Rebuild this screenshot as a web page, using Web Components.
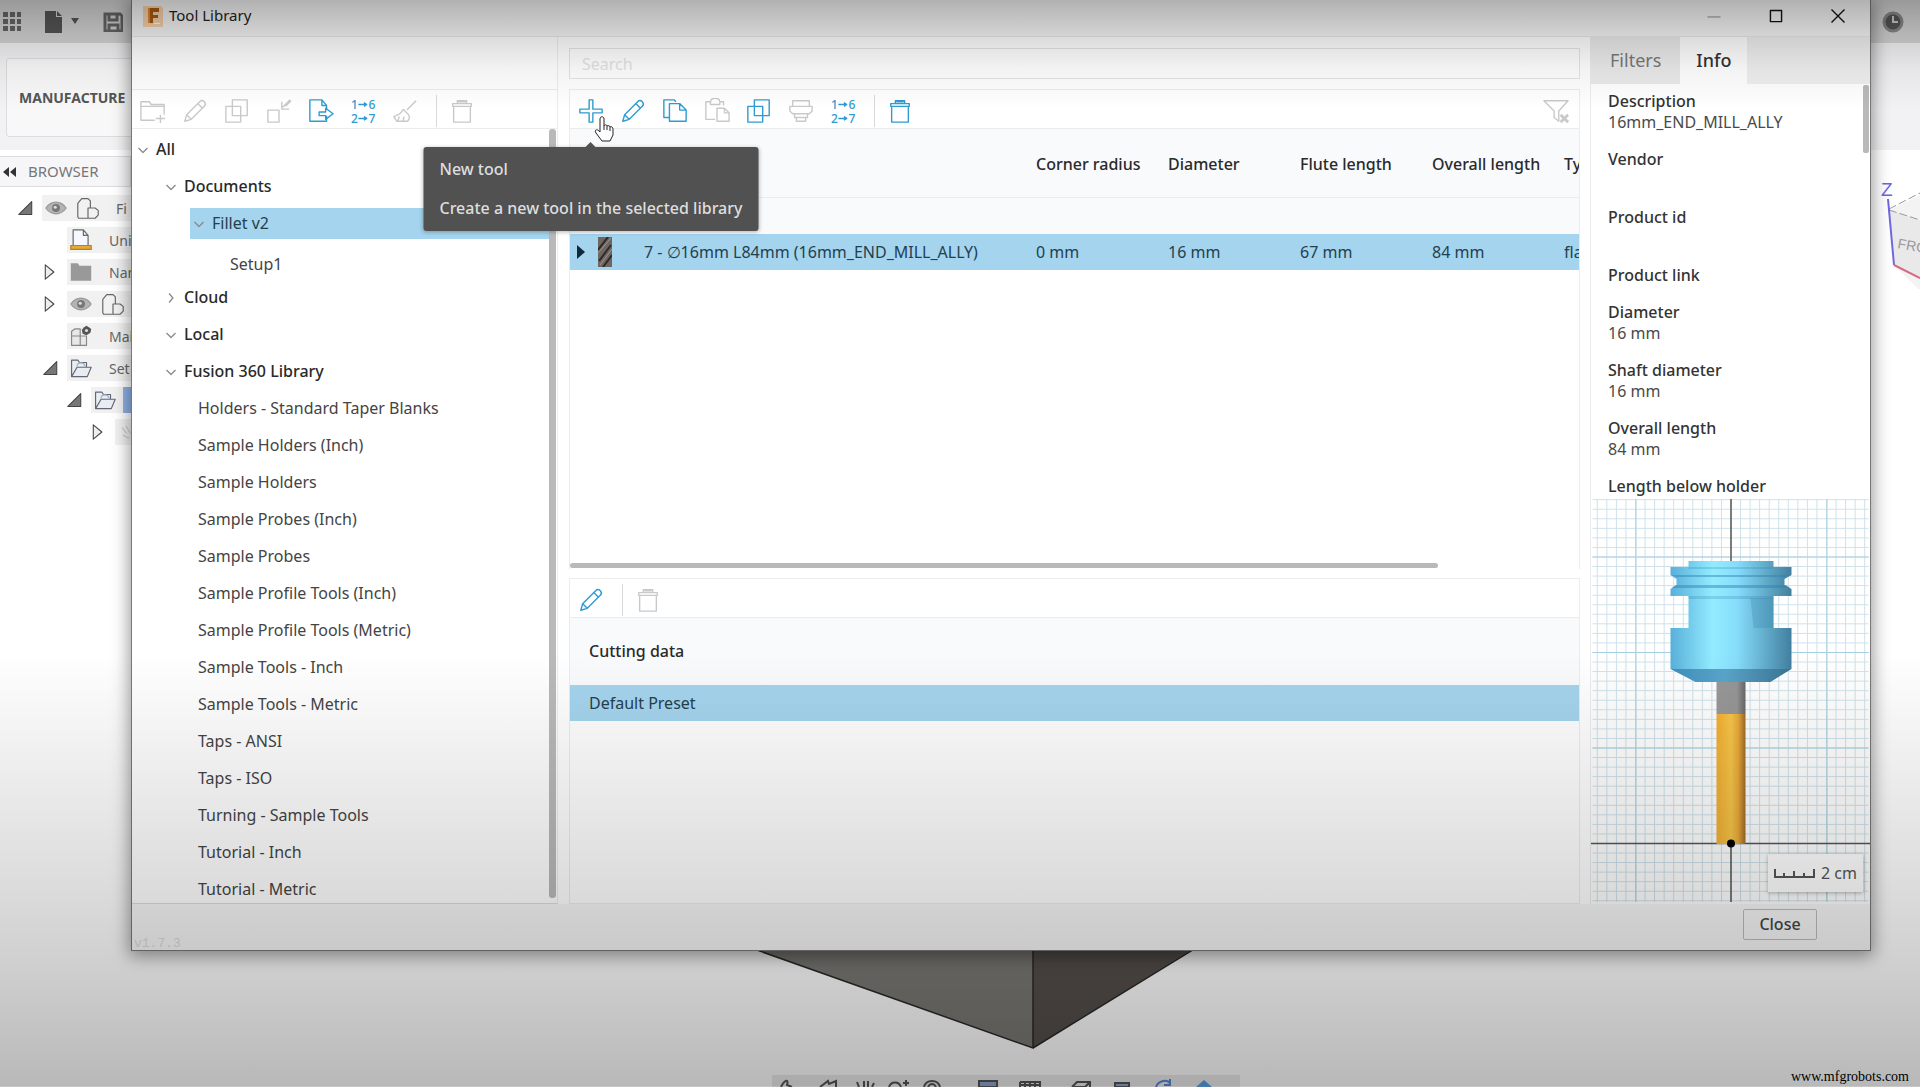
<!DOCTYPE html>
<html lang="en">
<head>
<meta charset="utf-8">
<meta name="viewport" content="width=device-width, initial-scale=1">
<title>Tool Library</title>
<style>
  html, body { height: 100%; margin: 0; }
  body {
    font-family: 'Noto Sans', 'Open Sans', sans-serif;
    font-size: 16px;
    line-height: 21px;
    color: #444;
    overflow: hidden;
    --accent: #2f9bd0;
    --muted: #c9c9c9;
    --select: #a5d4ee;
    --line: #ececec;
  }
</style>
</head>
<body>

<cam-workspace>
  <tool-library-window heading="Tool Library" version="v1.7.3">
    <library-panel slot="libraries"></library-panel>
    <tool-panel slot="tools"></tool-panel>
    <info-panel slot="info"></info-panel>
  </tool-library-window>
</cam-workspace>

<script>
/* Icon drawings, all on a 28 x 28 grid and stroked with currentColor */
const ICONS = {
  folderAdd: '<path d="M16 24H1V4h9l2 3h14v11M1 9h25M22 18v9M17 22h10"/>',
  pencil: '<path d="M3 25l2-7L19 4a3 3 0 0 1 5 5L10 23zM5 18l5 5M17 6l5 5"/>',
  duplicate: '<path d="M9 9V2h16v17h-7M18 26H2V9h16v17M9 9v10h9"/>',
  extract: '<path d="M2 13h12v13H2zM26 2l-8 8M17 4v8h8M21 9l6-6"/>',
  exportDoc: '<path d="M20 19v6H2V2h13l5 6v4M15 2v6h5"/><path d="M12 15h7v-4l8 6-8 6v-4h-7z"/>',
  broom: '<path d="M26 3L16 13M12 12l6 6M12 12c-2 5-5 6-10 8l3 5h12c2-3 2-5 1-7M8 20l-2 5M13 20l-1 5"/>',
  trash: '<path d="M4 6h20v3H4zM5 9h18v17H5zM9 6V3h10v3M10 4h8"/>',
  plus: '<path d="M12 2h4v10h10v4H16v10h-4V16H2v-4h10z"/>',
  copy: '<path d="M8 21H2V2h11l2 2M8 6h11l7 7v12H8zM19 6v7h7"/>',
  paste: '<path d="M12 23H2V4h5c0-5 10-5 10 0h4v4M7 4v3h10V4M14 11h8l5 5v9H14zM22 11v5h5"/>',
  holder: '<path d="M5 3h18v6H5zM2 9h24v5l-3 3H5l-3-3zM7 17h14v4H7zM9 21h10v4H9z"/>',
  filterClear: '<path d="M1 3h26L17 14v11l-5-4v-7z"/><path stroke-width="3" d="M19 18l8 8M27 18l-8 8"/>',
  renumber: `<g fill="currentColor" stroke="none" font-family="Noto Sans, sans-serif" font-size="13" font-weight="500">
      <text x="1" y="12">1</text><text x="20" y="12">6</text>
      <text x="1" y="27">2</text><text x="20" y="27">7</text></g>
    <path d="M9 7h8M15 5l3 2-3 2M9 22h8M15 20l3 2-3 2"/>`,
  down: '<path stroke-width="2" d="M7 11l7 7 7-7"/>',
  right: '<path stroke-width="2" d="M11 7l6 7-6 7"/>',
  minimize: '<path d="M7 15h14"/>',
  maximize: '<path d="M8 8h12v12H8z"/>',
  close: '<path d="M7 7l14 14M21 7L7 21"/>',
  opened: '<path fill="#777" d="M22 5v18H4z"/>',
  closed: '<path fill="#eee" d="M6 4v20l12-10z"/>',
  eye: '<path fill="#b4b4b4" stroke="#999" d="M1 14c7-10 19-10 26 0-7 10-19 10-26 0z"/><circle cx="14" cy="14" r="5" fill="#777" stroke="none"/><circle cx="13" cy="13" r="2" fill="#ddd" stroke="none"/>',
  body: '<path fill="#f2f2f2" d="M1 8l5-6h8l3 3v9h6l4 3v6l-4 4H2l-1-2zM14 27V14h3"/>',
  units: '<path fill="#f5f8fc" d="M4 21V1h13l6 7v13M17 1v7h6"/><path fill="#e5a93a" stroke="#b98218" d="M1 21h26v5H1z"/>',
  folder: '<path fill="#999" stroke="none" d="M1 3h9l2 3h15v19H1z"/>',
  model: '<path fill="#e8e8e8" stroke="#888" d="M2 8l4-3h7v9H2zM2 14h11v12H2zM13 14h8v12h-8z"/><path fill="#555" stroke="none" d="M21 1l3 2 3 2-1 5-5 3-5-2-1-5 3-3z"/><circle cx="21" cy="7" r="2" fill="#ddd" stroke="none"/>',
  setup: '<path fill="#e9edf2" stroke="#667" d="M2 25V4h8l2 3h9v6M2 25l7-12h18l-5 12z"/><path stroke="#9bb2c4" d="M9 12c0-6 9-6 10 0"/>',
  faint: '<path stroke="#ccc" d="M5 8l6 8M10 6l6 10M6 18l8 4"/>'
};

const icon = (name, size) =>
  `<svg class="icon" width="${size}" height="${size}" viewBox="0 0 28 28" fill="none" stroke="currentColor"
    stroke-width="1.5" stroke-linejoin="round" aria-hidden="true">${ICONS[name]}</svg>`;

/** Base class: puts the markup of a component in its open shadow root. */
class Component extends HTMLElement {
  constructor() {
    super();
    this.attachShadow({ mode: 'open' });
  }

  connectedCallback() {
    this.shadowRoot.innerHTML = `<style>:host { display: block; box-sizing: border-box; }
      *, *::before, *::after { box-sizing: border-box; }
      svg { display: block; flex: none; }
      button { font: inherit; color: inherit; margin: 0; padding: 0; border: 0; background: none; }
    </style>${this.template()}`;
  }

  template() { return '<slot></slot>'; }
}

/**
 * <icon-button icon="plus" label="New tool" [active]>
 */
class IconButton extends Component {
  template() {
    return `
      <style>
        :host { flex: none; color: var(--muted); }
        :host([active]) { color: var(--accent); }
        button { width: 42px; height: 36px; display: grid; place-items: center; }
      </style>
      <button type="button" aria-label="${this.getAttribute('label')}">${icon(this.getAttribute('icon'), 26)}</button>
    `;
  }
}

/** <tool-bar>: a row of icon buttons; <hr> inside it is a separator. */
class ToolBar extends Component {
  template() {
    return `
      <style>
        :host { display: flex; align-items: center; flex: none; height: 40px; padding-top: 4px; background: #fff;
                border-top: 1px solid var(--line); border-bottom: 1px solid var(--line); }
        ::slotted(hr) { width: 1px; height: 32px; margin: 0 4px 0 10px; border: 0; background: #d9d9d9; }
        ::slotted([end]) { margin: 0 2px 0 auto; }
      </style>
      <slot></slot>
    `;
  }
}

/** <hover-tip heading="...">: dark balloon with its arrow on the top edge. */
class HoverTip extends Component {
  template() {
    return `
      <style>
        :host { padding: 12px 16px; background: #515151; color: #dedede; border-radius: 3px;
                font-weight: 500; white-space: nowrap; box-shadow: 0 1px 4px rgba(0,0,0,.3); }
        :host::before { content: ''; position: absolute; top: -5px; left: calc(50% - 5px);
                border: 5px solid transparent; border-top: 0; border-bottom-color: #515151; }
        p { margin: 0 0 18px; }
        p:last-child { margin: 0; }
      </style>
      <p>${this.getAttribute('heading')}</p>
      <p><slot></slot></p>
    `;
  }
}

/** <library-panel>: toolbar and tree of tool libraries. */
class LibraryPanel extends Component {
  template() {
    const rows = [
      ['All', 0, 'down'], ['Documents', 1, 'down'], ['Fillet v2', 2, 'down', 'selected'], ['Setup1', 3, '', 'operation'],
      ['Cloud', 1, 'right'], ['Local', 1, 'down'], ['Fusion 360 Library', 1, 'down'],
      ...['Holders - Standard Taper Blanks', 'Sample Holders (Inch)', 'Sample Holders', 'Sample Probes (Inch)',
        'Sample Probes', 'Sample Profile Tools (Inch)', 'Sample Profile Tools (Metric)', 'Sample Tools - Inch',
        'Sample Tools - Metric', 'Taps - ANSI', 'Taps - ISO', 'Turning - Sample Tools', 'Tutorial - Inch',
        'Tutorial - Metric'].map(name => [name, 2, '', 'library'])
    ];
    return `
      <style>
        :host { display: flex; flex-direction: column; min-height: 0; padding-top: 52px;
                border-right: 1px solid var(--line); border-bottom: 1px solid #ddd; }
        .scroller { display: flex; flex: 1; min-height: 0; padding-right: 1px; overflow: hidden; }
        ul { flex: 1; margin: 0; padding: 2px 0 0; list-style: none; }
        li { padding-left: calc(var(--depth) * 28px + 2px); }
        button { display: flex; align-items: center; gap: 4px; width: 100%; height: 37px; text-align: left; white-space: nowrap; }
        .branch { font-weight: 500; color: #2a2a2a; }
        .icon { color: #8a8a8a; }
        .selected button { height: 31px; margin: 3px 0 7px; background: var(--select); font-weight: 400; color: #24404f; }
        .operation button { height: 33px; padding: 4px 0 0 12px; }
        .library button { padding-left: 8px; }
        .thumb { width: 7px; margin-bottom: 5px; border-radius: 3px; background: #b9b9b9; }
      </style>
      <tool-bar>
        <icon-button icon="folderAdd" label="New folder"></icon-button>
        <icon-button icon="pencil" label="Rename"></icon-button>
        <icon-button icon="duplicate" label="Duplicate library"></icon-button>
        <icon-button icon="extract" label="Import library"></icon-button>
        <icon-button icon="exportDoc" label="Export library" active></icon-button>
        <icon-button icon="renumber" label="Renumber" active></icon-button>
        <icon-button icon="broom" label="Clean up"></icon-button>
        <hr>
        <icon-button icon="trash" label="Delete library"></icon-button>
      </tool-bar>
      <div class="scroller">
        <ul>${rows.map(([name, depth, arrow, kind = 'branch']) => `
          <li class="${kind}" style="--depth:${depth}"><button type="button">${arrow ? icon(arrow, 18) : ''}${name}</button></li>`).join('')}
        </ul>
        <div class="thumb"></div>
      </div>
    `;
  }
}

/** <tool-panel>: search, tool table and cutting data of the selected library. */
class ToolPanel extends Component {
  template() {
    return `
      <style>
        :host { display: flex; flex-direction: column; gap: 10px; min-height: 0; min-width: 0; padding-top: 11px; }
        input { flex: none; width: 100%; height: 31px; padding: 0 12px; border: 1px solid #e4e4e4; background: transparent; font: inherit; }
        input::placeholder { color: #e2e2e2; opacity: 1; }
        .sections { flex: 1; min-height: 0; display: flex; flex-direction: column; gap: 9px; }
        section { display: flex; flex-direction: column; min-height: 0; border: 1px solid var(--line); border-width: 0 1px; }
        .tools { flex: 1; }
        .presets { flex: 0 0 40%; border-bottom-width: 1px; }
        .anchor { position: relative; }
        hover-tip { position: absolute; z-index: 2; top: 54px; left: 21px; translate: -50%; }
        .pointer { position: absolute; z-index: 3; top: 23px; left: 24px; }
        .clip { flex: 1; min-height: 0; overflow: hidden; }
        table { border-collapse: collapse; table-layout: fixed; width: 100%; }
        .tools table { width: calc(100% + 101px); }
        th, td { padding: 0 16px; text-align: left; white-space: nowrap; }
        th { height: 68px; padding-top: 3px; background: #f9fafc; font-weight: 500; color: #2a2a2a; }
        .presets th, .presets td { padding: 0 19px; }
        .presets th { height: 67px; }
        .metric { width: 132px; }
        .group td { height: 37px; border-top: 1px solid var(--line); background: #f9fafc; }
        .selected td { height: 36px; background: var(--select); color: #23404f; }
        .name { display: flex; align-items: center; gap: 12px; margin-left: -10px; }
        .name span { margin-left: 20px; }
        .track { flex: none; height: 6px; }
        .track div { width: 86%; height: 5px; border-radius: 3px; background: #b9b9b9; }
      </style>
      <input type="search" placeholder="Search" aria-label="Search">
      <div class="sections">
        <section class="tools">
          <tool-bar>
            <div class="anchor">
              <icon-button icon="plus" label="New tool" active></icon-button>
              <svg class="pointer" width="20" height="26" viewBox="0 0 20 26" fill="#fff" stroke="#222" stroke-linejoin="round">
                <path d="M6 16V3c0-3 4-3 4 0v7c1-2 3-1 3 0 1-1 3 0 3 1 1-1 3 0 3 2v6l-3 6H8l-6-8c-2-3 1-5 4-1z"/>
                <path d="M10 10v4M13 10v4M16 11v4"/>
              </svg>
              <hover-tip heading="New tool">Create a new tool in the selected library</hover-tip>
            </div>
            <icon-button icon="pencil" label="Edit tool" active></icon-button>
            <icon-button icon="copy" label="Copy tool" active></icon-button>
            <icon-button icon="paste" label="Paste tool"></icon-button>
            <icon-button icon="duplicate" label="Duplicate tool" active></icon-button>
            <icon-button icon="holder" label="Assign holder"></icon-button>
            <icon-button icon="renumber" label="Renumber tools" active></icon-button>
            <hr>
            <icon-button icon="trash" label="Delete tool" active></icon-button>
            <icon-button icon="filterClear" label="Clear filters" end></icon-button>
          </tool-bar>
          <div class="clip">
            <table>
              <thead>
                <tr><th></th><th class="metric">Corner radius</th><th class="metric">Diameter</th>
                <th class="metric">Flute length</th><th class="metric">Overall length</th><th class="metric">Type</th></tr>
              </thead>
              <tbody>
                <tr class="group"><td colspan="6"></td></tr>
                <tr class="selected">
                  <td><div class="name">
                    <svg width="10" height="14" viewBox="0 0 10 14"><path fill="#102a3a" d="M1 0v14l8-7z"/></svg>
                    <svg width="14" height="30" viewBox="0 0 14 30"><path fill="#6d6662" d="M0 0h14v30H0z"/>
                      <path fill="none" stroke="#2f2a28" stroke-width="2" d="M0 13L10 0M1 24l12-16M5 30l9-12"/>
                      <path fill="none" stroke="#a3968b" d="M0 16L13 1M2 28l12-16"/></svg>
                    <span>7 - ∅16mm L84mm (16mm_END_MILL_ALLY)</span></div></td>
                  <td>0 mm</td><td>16 mm</td><td>67 mm</td><td>84 mm</td><td>flat</td>
                </tr>
              </tbody>
            </table>
          </div>
          <div class="track"><div></div></div>
        </section>
        <section class="presets">
          <tool-bar>
            <icon-button icon="pencil" label="Edit preset" active></icon-button>
            <hr>
            <icon-button icon="trash" label="Delete preset"></icon-button>
          </tool-bar>
          <table>
            <thead><tr><th>Cutting data</th></tr></thead>
            <tbody><tr class="selected"><td>Default Preset</td></tr></tbody>
          </table>
        </section>
      </div>
    `;
  }
}

/** <tool-preview>: side view of the selected tool in its holder. */
class ToolPreview extends Component {
  template() {
    return `
      <style>
        :host { position: relative; overflow: hidden; }
        .drawing { width: 100%; height: 100%; }
        .scale { position: absolute; right: 7px; bottom: 12px; display: flex; align-items: center; gap: 6px;
                 height: 38px; padding: 0 6px; background: #fff; box-shadow: 0 1px 4px rgba(0,0,0,.3); color: #555; }
      </style>
      <svg class="drawing" viewBox="0 0 280 405" preserveAspectRatio="xMidYMax slice" role="img" aria-label="Tool preview">
        <defs>
          <pattern id="minor" x="140" y="344" width="9.55" height="9.55" patternUnits="userSpaceOnUse">
            <path d="M0 .5H9.55M.5 0V9.55" stroke="#cde1e9" fill="none"/>
          </pattern>
          <pattern id="major" x="45" y="57.500" width="191" height="95.500" patternUnits="userSpaceOnUse">
            <path d="M0 .5H191M.5 0V95.5" stroke="#a6d0e2" fill="none"/>
          </pattern>
          <linearGradient id="steel">
            <stop offset="0" stop-color="#58afda"/><stop offset=".35" stop-color="#92ecff"/>
            <stop offset=".55" stop-color="#86dcfb"/><stop offset="1" stop-color="#427f9f"/>
          </linearGradient>
          <linearGradient id="cone">
            <stop offset="0" stop-color="#3e8fbb"/><stop offset=".45" stop-color="#5aa5cb"/><stop offset="1" stop-color="#3b7391"/>
          </linearGradient>
          <linearGradient id="shank">
            <stop offset="0" stop-color="#989898"/><stop offset=".7" stop-color="#969696"/><stop offset="1" stop-color="#666"/>
          </linearGradient>
          <linearGradient id="flute">
            <stop offset="0" stop-color="#f2ad33"/><stop offset=".5" stop-color="#f6c648"/>
            <stop offset=".75" stop-color="#eaa83a"/><stop offset="1" stop-color="#9c6b26"/>
          </linearGradient>
        </defs>
        <rect x="2" width="276" height="403" fill="url(#minor)"/>
        <rect x="2" width="276" height="403" fill="url(#major)"/>
        <path d="M140.500 0V403M0 344.500H280" stroke="#555" stroke-width="1.500"/>
        <path d="M126 183h29v32h-29z" fill="url(#shank)"/>
        <path d="M126 215h29v130h-29z" fill="url(#flute)"/>
        <path d="M98 62h85v6h18v8l-7 4v6l7 4v7h-18v32h18v41H80v-41h18V97H80v-7l6-4v-6l-6-4v-8h18z" fill="url(#steel)"/>
        <path d="M80 170h121l-21 13h-75z" fill="url(#cone)"/>
        <path d="M80 76h121l-7 2H86zM85 86h111l4 3H81z" fill="#2f7fae" opacity=".45"/>
        <path d="M98 68h85v2H98zM98 97h85v3H98z" fill="#2f7fae" opacity=".25"/>
        <path d="M160 99h23v30h-20z" fill="#3b87ae" opacity=".3"/>
        <circle cx="140.500" cy="344.500" r="4" fill="#000"/>
      </svg>
      <div class="scale">
        <svg width="41" height="12" viewBox="0 0 41 12" fill="none" stroke="#555" stroke-width="2">
          <path d="M1 2v8h39V2M10 10V6M20 10V4M30 10V6"/></svg>
        2 cm
      </div>
    `;
  }
}

/** <info-panel>: Filters / Info tabs, the properties of the tool and its preview. */
class InfoPanel extends Component {
  template() {
    const facts = [['Description', '16mm_END_MILL_ALLY'], ['Vendor', '&nbsp;'], ['Product id', '&nbsp;'], ['Product link'],
      ['Diameter', '16 mm'], ['Shaft diameter', '16 mm'], ['Overall length', '84 mm'], ['Length below holder']];
    return `
      <style>
        :host { display: flex; flex-direction: column; min-height: 0; border-left: 1px solid var(--line); }
        nav { display: flex; flex: none; height: 47px; background: #efefef; font-size: 18px; }
        nav button { padding: 0 19px; color: #777; background: #eaeaea; }
        nav button[aria-selected=true] { padding: 0 16px; color: #333; font-weight: 500; background: #fff; }
        .scroller { flex: 1; min-height: 0; display: flex; overflow: hidden; }
        dl { flex: 1; margin: 0; padding: 7px 17px 0; }
        dt { font-weight: 500; color: #333; }
        dd { margin: 0; color: #4a4a4a; }
        .fact { margin-bottom: 16px; }
        .thumb { width: 6px; height: 68px; margin: 1px; border-radius: 2px; background: #b9b9b9; }
        tool-preview { flex: 0 0 405px; }
      </style>
      <nav role="tablist">
        <button type="button" role="tab" aria-selected="false">Filters</button>
        <button type="button" role="tab" aria-selected="true">Info</button>
      </nav>
      <div class="scroller">
        <dl>${facts.map(([term, value]) => `
          <div class="fact"><dt>${term}</dt>${value ? `<dd>${value}</dd>` : ''}</div>`).join('')}
        </dl>
        <div class="thumb"></div>
      </div>
      <tool-preview></tool-preview>
    `;
  }
}

/** <tool-library-window>: window frame with title bar, three columns and footer. */
class ToolLibraryWindow extends Component {
  template() {
    return `
      <style>
        :host { display: flex; flex-direction: column; background: #fff; border: 1px solid #777; border-top: 0;
                box-shadow: 0 3px 16px 2px rgba(0,0,0,.4); }
        header { display: flex; align-items: center; flex: none; height: 37px; padding: 0 11px 5px; background: #f6f6f6; border-bottom: 1px solid #e8e8e8; }
        h1 { margin: 0 auto 0 6px; font-size: 15px; font-weight: 400; color: #222; }
        header button { width: 62px; height: 32px; display: grid; place-items: center; color: #111; }
        header button:disabled { color: #aaa; }
        header button:last-child { margin-right: -10px; }
        main { flex: 1; min-height: 0; display: grid; grid-template-rows: minmax(0, 1fr);
               grid-template-columns: 426px minmax(0, 1fr) 290px; }
        slot[name=tools]::slotted(*) { margin-left: 11px; }
        slot[name=info]::slotted(*) { margin-left: 10px; }
        footer { display: flex; justify-content: space-between; align-items: flex-start; flex: none; height: 46px; padding: 5px 53px 0 2px; background: #f6f6f6; }
        footer small { align-self: flex-end; font: 13px/12px 'Liberation Mono', monospace; color: #dadada; }
        footer button { width: 74px; height: 31px; border: 1px solid #bbb; border-radius: 2px; font-weight: 500; }
      </style>
      <header>
        <svg width="20" height="22" viewBox="0 0 20 22"><path fill="#f7d3ae" d="M0 1h18l2 2v19H0z"/>
          <path fill="#a85a10" d="M5 3h11v4h-6v3h5v3h-5v5H5z"/><path fill="#e38a2e" d="M5 3h2v15H5z"/><path fill="#fff" d="M11 18h6v1h-6z"/></svg>
        <h1>${this.getAttribute('heading')}</h1>
        <button type="button" aria-label="Minimize" disabled>${icon('minimize', 26)}</button>
        <button type="button" aria-label="Maximize">${icon('maximize', 26)}</button>
        <button type="button" aria-label="Close window">${icon('close', 26)}</button>
      </header>
      <main><slot name="libraries"></slot><slot name="tools"></slot><slot name="info"></slot></main>
      <footer><small>${this.getAttribute('version')}</small><button type="button">Close</button></footer>
    `;
  }
}

/** <model-browser>: tree of the open document, left of the canvas. */
class ModelBrowser extends Component {
  template() {
    const rows = [
      [16, 'opened', ['eye', 'body'], 'Fi'], [41, '', ['units'], 'Uni'], [41, 'closed', ['folder'], 'Nan'],
      [41, 'closed', ['eye', 'body'], ''], [41, '', ['model'], 'Mai'], [41, 'opened', ['setup'], 'Set'],
      [65, 'opened', ['setup'], '', 'current'], [89, 'closed', ['faint'], '']
    ];
    return `
      <style>
        :host { width: 131px; overflow: hidden; }
        header { display: flex; align-items: center; gap: 12px; height: 31px; padding-left: 3px; font-size: 15px; color: #777;
                 background: #f6f6f8; border: 1px solid #ddd; border-left: 0; }
        ul { margin: 5px 0 0; padding: 0; list-style: none; }
        li { display: flex; align-items: center; height: 32px; font-size: 14px; color: #666; padding-left: var(--indent); white-space: nowrap; }
        .twist { flex: none; width: 26px; color: #444; }
        .strip { display: flex; align-items: center; flex: 1; min-width: 0; gap: 10px; height: 26px; padding-left: 3px; background: #f1f1f1; color: #666; }
        .strip span { padding-left: 7px; }
        .current .strip { gap: 7px; }
        .current .strip::after { content: ''; width: 20px; height: 26px; background: #8fb0e6; }
      </style>
      <header><svg width="13" height="10" viewBox="0 0 13 10"><path fill="#333" d="M6 0v10L0 5zM13 0v10L7 5z"/></svg>BROWSER</header>
      <ul>${rows.map(([indent, twist, icons, name, state = '']) => `
        <li class="${state}" style="--indent:${indent}px"><div class="twist">${twist ? icon(twist, 20) : ''}</div>
        <div class="strip">${icons.map(i => icon(i, 22)).join('')}${name && `<span>${name}</span>`}</div></li>`).join('')}
      </ul>
    `;
  }
}

/** <cam-workspace>: the CAM application behind the window passed in its slot. */
class CamWorkspace extends Component {
  template() {
    return `
      <style>
        :host { position: relative; display: flex; flex-direction: column; height: 100%; overflow: hidden; background: #fff; }
        .bar { display: flex; align-items: center; flex: none; height: 43px; padding: 0 16px 0 3px; background: #d4d4d4; color: #666; }
        .bar svg { margin-right: 24px; }
        .bar .clock { margin: 0 0 0 auto; }
        .ribbon { flex: none; height: 113px; padding: 15px 6px; background: #f2f2f4; border-bottom: 6px solid #fff; }
        .ribbon button { height: 79px; width: 200px; padding: 0 12px; text-align: left; font-size: 14px; font-weight: 700; color: #555;
                         border: 1px solid #ddd; border-radius: 3px; background: #f8f8f9; }
        .solid { position: absolute; left: 50%; bottom: 37px; width: 440px; margin-left: -206px; }
        .cube { position: absolute; top: 179px; right: 0; }
        .view { position: absolute; bottom: 0; left: 50%; width: 468px; margin-left: -188px; background: #ececec; }
        ::slotted(tool-library-window) { position: absolute; z-index: 1; inset: 0 49px 136px 131px; }
        .shade { position: absolute; z-index: 2; inset: 0; pointer-events: none;
                 background: linear-gradient(rgba(0,0,0,.28), rgba(0,0,0,.15) 30%, rgba(0,0,0,.05) 62%, transparent) top / 100% 110px no-repeat,
                 linear-gradient(transparent, rgba(0,0,0,.08) 30%, rgba(0,0,0,.14) 55%, rgba(0,0,0,.19) 72%, rgba(0,0,0,.28)) bottom / 100% 40% no-repeat; }
        .site { position: absolute; z-index: 3; right: 11px; bottom: 0; font: 14px/20px 'Liberation Serif', serif; color: #000; text-decoration: none; }
      </style>
      <div class="bar">
        <svg width="18" height="20" viewBox="0 0 18 20" fill="#666"><path d="M0 0h5v5H0zM7 0h5v5H7zM14 0h5v5h-5zM0 7h5v5H0zM7 7h5v5H7zM14 7h5v5h-5zM0 14h5v5H0zM7 14h5v5H7zM14 14h5v5h-5z"/></svg>
        <svg width="34" height="22" viewBox="0 0 34 22" fill="#555"><path d="M0 0h11v6h6v16H0zM12 0l5 5h-5zM26 7h8l-4 6z"/></svg>
        <svg width="20" height="20" viewBox="0 0 20 20" fill="none" stroke="#666" stroke-width="3"><path d="M2 2h15l2 2v15H2zM6 2v6h8V2M6 19v-6h9v6"/></svg>
        <svg class="clock" width="22" height="22" viewBox="0 0 22 22"><circle cx="11" cy="11" r="9" fill="#555" stroke="#888" stroke-width="3"/><path d="M11 5v6h5" fill="none" stroke="#ccc" stroke-width="2"/></svg>
      </div>
      <div class="ribbon"><button type="button">MANUFACTURE</button></div>
      <model-browser></model-browser>
      <svg class="cube" width="40" height="110" viewBox="0 0 40 110">
        <path fill="#f3f3f3" d="M9 31l31-15v96L14 86z"/><path fill="#e9e9e9" d="M9 31l31 10v58L14 86z"/>
        <path fill="none" stroke="#999" stroke-dasharray="8 3" d="M9 30l31-16M9 31l31 10"/>
        <path fill="none" stroke="#7168e0" stroke-width="2" d="M8 20l6 66"/><path fill="none" stroke="#d66a80" stroke-width="2" d="M14 86l26 13"/>
        <text x="1" y="17" font-size="19" font-family="Liberation Sans, sans-serif" fill="#6d63e6">Z</text>
        <text x="17" y="69" font-size="14" font-family="Liberation Sans, sans-serif" fill="#999" transform="rotate(10 17 69)">FRO</text>
      </svg>
      <svg class="solid" height="101" viewBox="0 0 440 101">
        <path fill="#797873" d="M0 0h279v99z"/><path fill="#544e4a" d="M279 0h160L279 99z"/>
        <path fill="none" stroke="#2a2826" stroke-width="1.500" d="M0 0l279 99V0M279 99L440 0"/>
      </svg>
      <svg class="view" height="12" viewBox="0 0 468 12" fill="none" stroke="#555" stroke-width="2">
        <path d="M9 12c4-8 8-8 6-2l5 2M48 12l8-6 1 3 7-3v6M87 12l-2-5M92 12V6M96 12V6M100 12l2-4M117 12c2-6 10-6 12 0M131 8h6M134 5v6"/>
        <path d="M152 12c2-8 14-8 16 0M156 12c2-4 6-4 8 0M248 7h20v5M248 12V7M248 10h20M253 7v5M258 7v5M263 7v5M300 12l5-5h13v5M300 12h13l5-5"/>
        <path fill="#8ea6d8" d="M207 12V6h18v6zM343 12V8h14v4z"/><path stroke="#5c88dc" d="M384 12c2-6 10-8 14-4M398 4v6h-6"/><path fill="#5aa0e0" stroke="none" d="M424 12l8-7 8 7z"/>
      </svg>
      <slot></slot>
      <div class="shade"></div>
      <a class="site" href="http://www.mfgrobots.com">www.mfgrobots.com</a>
    `;
  }
}

customElements.define('icon-button', IconButton);
customElements.define('tool-bar', ToolBar);
customElements.define('hover-tip', HoverTip);
customElements.define('library-panel', LibraryPanel);
customElements.define('tool-panel', ToolPanel);
customElements.define('tool-preview', ToolPreview);
customElements.define('info-panel', InfoPanel);
customElements.define('tool-library-window', ToolLibraryWindow);
customElements.define('model-browser', ModelBrowser);
customElements.define('cam-workspace', CamWorkspace);
</script>
</body>
</html>
